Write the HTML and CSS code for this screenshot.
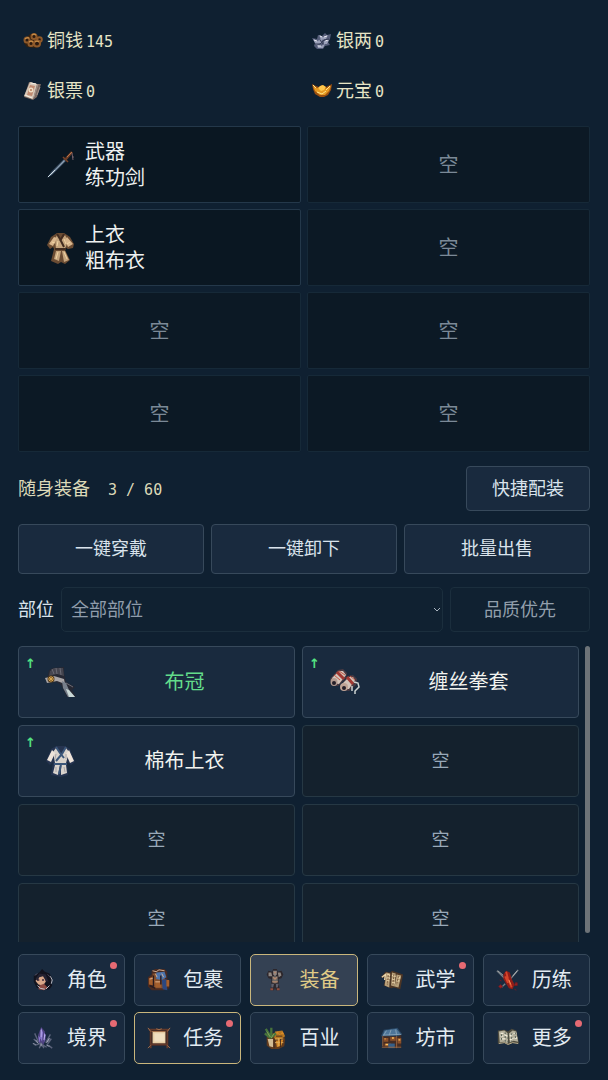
FILE: index.html
```
<!DOCTYPE html>
<html lang="zh-CN">
<head>
<meta charset="utf-8">
<meta name="viewport" content="width=device-width, initial-scale=1">
<title>装备</title>
<link rel="stylesheet" href="styles.css">
</head>
<body>
<main class="screen">
  <section class="wallet" aria-label="货币">
    <div class="coin">
      <svg class="icon-sm" viewBox="0 0 20 20" aria-hidden="true"><path d="M3 7l4-4h6l6 5-1 6-6 3-8-1-3-4z" fill="#33200f"/><g fill="#2b1a10" stroke="#8f5a2b" stroke-width="2"><circle cx="11" cy="5.500" r="2.500"/><circle cx="4" cy="9" r="2.500"/><circle cx="16.500" cy="8.500" r="2.300"/><circle cx="8" cy="12.500" r="2.500"/><circle cx="14" cy="12.500" r="3"/></g><g fill="none" stroke="#d39a50"><path d="M9 4q2-2 4 0M2 8q2-2 4-1M6 11q2-2 4 0M12 11q2-2 4 0"/></g></svg>
      <span>铜钱</span><span class="num">145</span>
    </div>
    <div class="coin">
      <svg class="icon-sm" viewBox="0 0 20 20" aria-hidden="true"><path d="M0 7l5 1 1-4 4 1 3-3 2 2 4-1-1 5-2 3 2 3-5 1-2 3H5l-3-3 1-3z" fill="#555d79"/><path d="M1 8l4 2 5-2-1 4-5 2zM7 4l4 2 5-2-2 4-5 1zM5 14l4 1 4-2-2 4H6zM12 10l5-1-2 4h-3z" fill="#9aa0b8"/><path d="M2 9l3 1M12 6l3-1M8 5l2 1M6 15h3M13 10l3-1" stroke="#e6e7ef"/><path d="M3 13l5 0 4-4 5-1M8 9l3 4" stroke="#353c55" fill="none"/></svg>
      <span>银两</span><span class="num">0</span>
    </div>
    <div class="coin">
      <svg class="icon-sm" viewBox="0 0 20 20" aria-hidden="true"><path d="M6 1l8 2 4 0-4 13-4 3-9-3z" fill="#7d6a62"/><path d="M7 1l7 2-4 15-9-3z" fill="#d6c7b8"/><path d="M7 4l5 1-3 10-5-1z" fill="#c08a70"/><circle cx="8" cy="9" r="2.500" fill="#f0dfc5"/><circle cx="8" cy="9" r="1" fill="#b87858"/><path d="M15 3l-4 13M17 6l-3 8" stroke="#a49389" fill="none"/><path d="M8 2l5 1M2 14l7 3" stroke="#f6eee0"/></svg>
      <span>银票</span><span class="num">0</span>
    </div>
    <div class="coin">
      <svg class="icon-sm" viewBox="0 0 20 20" aria-hidden="true"><path d="M0 3l4 2 3 1 3-2 4 2 6-3-1 6-3 5-4 2H8l-5-3-2-5z" fill="#9c5010"/><path d="M1 5l4 2 5 1 5-1 4-2-2 5-4 4H8l-5-4z" fill="#e79a22"/><path d="M6 7l2-2 3-1 3 2-2 3-3 1z" fill="#ffc84c"/><path d="M1 4l3 3M5 11l5 2 4-3M18 5l-4 4" stroke="#ffe58d" fill="none"/></svg>
      <span>元宝</span><span class="num">0</span>
    </div>
  </section>

  <section class="worn" aria-label="已穿戴">
    <button class="slot" type="button">
      <svg class="icon-md" viewBox="0 0 28 32" aria-hidden="true"><path d="M0 29l4-6L17 10l2 2L5 26z" fill="#3b4f64"/><path d="M1 28L17 11l1 1L5 25z" fill="#8fa2b4"/><path d="M1 28l7-7" stroke="#d4e0e6"/><path d="M16 8l5 5" stroke="#7c452a" stroke-width="1.500"/><path d="M18 11l7-8" stroke="#6e3d26" stroke-width="2.500"/><path d="M20 8l5-5" stroke="#b8754a"/><path d="M25 4l1 7M25 8h2" stroke="#74606a"/></svg>
      <span class="lines"><span>武器</span><span>练功剑</span></span>
    </button>
    <button class="slot slot-empty" type="button">空</button>
    <button class="slot" type="button">
      <svg class="icon-md" viewBox="0 0 28 32" aria-hidden="true"><path d="M10 1h7l6 4 4 7-1 4-5 1-3-2v3l5 10-5 4-4-2-3 2-7-3 3-12-1-2-3 2-3-4 4-8z" fill="#6b4c33"/><path d="M10 3l4 5 4-5 3 6-3 8H9L8 7zM9 19h5l-2 10-5-2zM15 19h3l4 9-5 2z" fill="#c5a57e"/><path d="M7 5l-5 7 4 2 4-8zM20 5l6 7-5 3-3-7z" fill="#d9b68d"/><path d="M10 2l3 5 4 8M17 2l-4 7M8 17h11" stroke="#422c20" stroke-width="2" fill="none"/><path d="M11 9l-1 5M17 7l2 5M11 20l-2 7M17 20l3 7M5 10l3 1M23 10l-3 2" stroke="#f0d3a4" fill="none"/></svg>
      <span class="lines"><span>上衣</span><span>粗布衣</span></span>
    </button>
    <button class="slot slot-empty" type="button">空</button>
    <button class="slot slot-empty" type="button">空</button>
    <button class="slot slot-empty" type="button">空</button>
    <button class="slot slot-empty" type="button">空</button>
    <button class="slot slot-empty" type="button">空</button>
  </section>

  <header class="bag-head">
    <h1 class="bag-title">随身装备</h1>
    <span class="num">3 / 60</span>
    <button class="btn btn-quick" type="button">快捷配装</button>
  </header>

  <div class="actions">
    <button class="btn" type="button">一键穿戴</button>
    <button class="btn" type="button">一键卸下</button>
    <button class="btn" type="button">批量出售</button>
  </div>

  <div class="filters">
    <label for="part">部位</label>
    <div class="select-wrap">
      <select id="part" class="select"><option>全部部位</option></select>
      <svg class="chevron" viewBox="0 0 6 4" aria-hidden="true"><path d="M0 0l3 3 3-3" fill="none" stroke="#a9b4bf"/></svg>
    </div>
    <button class="btn btn-dim" type="button">品质优先</button>
  </div>

  <section class="bag" aria-label="背包">
    <div class="bag-grid">
      <button class="item" type="button">
        <span class="better">↑</span>
        <svg class="icon-lg" viewBox="0 0 32 32" aria-hidden="true"><path d="M2 12L4 4l4-2 11-1 0 6 2 9 9 5-3 3 4 7-9 0-6-12-5-3-9 1z" fill="#262833"/><path d="M5 5l4-3 9 0 1 8-7-2-8 2z" fill="#45454f"/><path d="M7 3l2 5M11 2l1 6M15 2l1 7M21 17l7 4" stroke="#6a6a74"/><path d="M0 12l9-2 10 3 1 5-8-3-10 2z" fill="#a9a5a6"/><path d="M17 15l4 2 3 7 6 7h-7l-5-9z" fill="#777f8b"/><path d="M21 23l3 1 6 7h-6z" fill="#c9d8d6"/><circle cx="6" cy="13" r="3.500" fill="#59401e"/><path d="M6 10v6M3 13h6M4 11l4 4M8 11l-4 4" stroke="#d6a451"/></svg>
        <span class="item-name is-fine">布冠</span>
      </button>
      <button class="item" type="button">
        <span class="better">↑</span>
        <svg class="icon-lg" viewBox="0 0 32 32" aria-hidden="true"><path d="M1 13L9 4l5-1 4 4-1 5-8 8-6-1zM12 19l7-9 5-1 4 4-1 6-7 6-6-1z" fill="#4b3a42"/><path d="M3 12l7-7 4 0 3 4-7 9-6-1zM13 18l7-7 4 0 2 3-6 9-5 0z" fill="#d3c4ba"/><path d="M8 6l7 7M18 11l6 7" stroke="#a03832" stroke-width="3"/><path d="M10 5l6 4M5 9l6 5M21 10l5 4" stroke="#c45643"/><ellipse cx="5" cy="16" rx="3.500" ry="4" fill="#b39b90"/><ellipse cx="15" cy="21" rx="4" ry="4" fill="#c0a496"/><circle cx="5" cy="17" r="2" fill="#251f29"/><circle cx="15" cy="22" r="2" fill="#251f29"/><path d="M25 16l4 1 1 4-4 4 0 3M23 20v5" fill="none" stroke="#ccd2d1" stroke-width="1.500"/></svg>
        <span class="item-name">缠丝拳套</span>
      </button>
      <button class="item" type="button">
        <span class="better">↑</span>
        <svg class="icon-lg" viewBox="0 0 32 32" aria-hidden="true"><path d="M11 1h9l5 3 5 13-4 3-4-3 1 13-7 2-10-2 2-13-3 3-4-4L6 4z" fill="#263450"/><path d="M11 3l5 6 5-6 3 4-3 11H10L8 7zM10 20h5l-2 10-5-2zM16 20h5l1 8-6 2z" fill="#d9d3cc"/><path d="M7 5L2 15l4 2 4-9zM24 5l5 11-4 2-4-9z" fill="#eee4da"/><path d="M11 2l4 6 4 5M21 2l-4 7-6 7M9 19h13M16 20l-2 9" fill="none" stroke="#3b5679" stroke-width="2"/><path d="M11 9l-1 5M21 9v5M11 22v5M19 22l1 5" stroke="#aaa5a9"/></svg>
        <span class="item-name">棉布上衣</span>
      </button>
      <button class="item item-empty" type="button">空</button>
      <button class="item item-empty" type="button">空</button>
      <button class="item item-empty" type="button">空</button>
      <button class="item item-empty" type="button">空</button>
      <button class="item item-empty" type="button">空</button>
    </div>
    <div class="track" aria-hidden="true"><div class="thumb"></div></div>
  </section>

  <nav class="tabs" aria-label="主菜单">
    <button class="tab" type="button">
      <svg class="icon-tab" viewBox="-1 -1 26 26" aria-hidden="true"><path d="M8 4l3-4 3 3 5 2 3 5-1 5 1 3-3 4-7 1-7-3-3-6 0-7z" fill="#11131e"/><path d="M5 10l4-4 5 2 1 6-3 4-5-1-3-4z" fill="#d9a88a"/><path d="M4 11l4-6 7 1 3 8-3-1-3-5-4 1-2 4z" fill="#242232"/><path d="M6 12h2M11 12h2" stroke="#352033" stroke-width="1.500"/><path d="M8 18l5-2 4 4-4 3-6-1z" fill="#8d4c43"/><path d="M6 18l3 3 5 1M20 8l2 4-1 4M19 18l-4 4" stroke="#c5c7cf" fill="none"/><path d="M3 7l3-2M17 6l3 3" stroke="#575268"/></svg>
      <span>角色</span><i class="dot"></i>
    </button>
    <button class="tab" type="button">
      <svg class="icon-tab" viewBox="-1 -1 26 26" aria-hidden="true"><path d="M4 2l4-2h10l3 3v8l3 2-1 8-6 2H4l-4-4V9l4-3z" fill="#492a20"/><path d="M5 5h13l1 16H6z" fill="#83502e"/><path d="M9 4l9-1 2 6-5 3-6-1z" fill="#4b73ab"/><path d="M15 12l5-1 1 12-5-1z" fill="#2b4780"/><path d="M1 10l5-2 2 5-1 5-6-1zM8 13h6v7H8zM20 12h3v7h-3z" fill="#a55f2d"/><path d="M5 2l4 1 3-2 6 1M2 11l4-1M8 14h5M8 5l2 4M15 5l2 4" stroke="#d9b598" fill="none"/><path d="M6 7v12M14 7v10M2 18l6 3" stroke="#281b20" stroke-width="1.500"/></svg>
      <span>包裹</span>
    </button>
    <button class="tab is-active" type="button" aria-current="page">
      <svg class="icon-tab" viewBox="-1 -1 26 26" aria-hidden="true"><path d="M10 0h4l1 3 4-1 2 4-2 4-3 1 0 4 1 8h-4l-1-3-1 3H7l1-8 0-4-3-1-2-4 2-4 4 1z" fill="#2c262b"/><path d="M10 2h4v4l-2 2-2-2zM5 4l3 0 1 4H5zM15 4h3l1 3-3 2z" fill="#8d8580"/><path d="M9 8h6l0 6-3 2-3-2z" fill="#6d6864"/><path d="M10 9l2 2 2-2M9 14h6M11 4h2" fill="none" stroke="#b5886d" stroke-width="1.500"/><path d="M8 16l3 0-1 4H8zM13 16l3 0-1 4h-2z" fill="#5d5f6c"/><path d="M7 22h3M14 22h3" stroke="#8f4d3f" stroke-width="2"/></svg>
      <span>装备</span>
    </button>
    <button class="tab" type="button">
      <svg class="icon-tab" viewBox="-1 -1 26 26" aria-hidden="true"><path d="M0 9l5-6 5 1 2-2 12 4-3 16-7-2-3 1-8-3 2-8z" fill="#4c3525"/><path d="M6 4l4 1-1 15-5-2zM12 4l4 1-1 14-4-1zM17 6l5 1-3 13-4-1z" fill="#b7a07a"/><path d="M1 9l4-3-1 6M7 6l3 1M6 10h4M6 13h3M12 7l4 1M12 11h3M12 15h3M18 9l3 1M17 13h3" stroke="#ead5ab" stroke-width="1.500" fill="none"/><path d="M8 7l-1 10M14 6l-1 11M19 8l-2 9" stroke="#765237" stroke-dasharray="2 1"/></svg>
      <span>武学</span><i class="dot"></i>
    </button>
    <button class="tab" type="button">
      <svg class="icon-tab" viewBox="-1 -1 26 26" aria-hidden="true"><path d="M0 2l9 9M23 1L13 13M9 16l-4 4" stroke="#777f86" stroke-width="1.500"/><path d="M1 2l6 5M22 2l-5 6" stroke="#d2d4cf" stroke-width=".7"/><path d="M7 6l3-4 4 2 2 7 3 6-2 5-4-1-3-5-3-5z" fill="#8f1d18"/><path d="M10 3l2 8 4 9M9 8l3 7" stroke="#d5442a" stroke-width="2" fill="none"/><path d="M13 12l2 5" stroke="#f09457"/><path d="M4 17l2 2-2 2-2-2zM20 15h2v3h-3zM3 12l2 1M19 22l2 1" fill="#9b2222" stroke="#701a22"/></svg>
      <span>历练</span>
    </button>
    <button class="tab" type="button">
      <svg class="icon-tab" viewBox="-1 -1 26 26" aria-hidden="true"><path d="M7 8l3-8 4 5 1 9-3 6-6-4z" fill="#4d427f"/><path d="M10 1l2 5-1 10-2-4zM7 9l2 3-1 6zM13 6l2 3-2 8z" fill="#8a79cf"/><path d="M10 3v8M14 8l-1 6" stroke="#c0b3ee"/><path d="M2 13l4 4M3 7l4 9M20 8l-5 9 6-4-5 7M3 20l6-2 7 4M8 23l2-5 3 5M18 20l4 3" stroke="#5b637b" stroke-width="1.500" fill="none"/><path d="M4 14l3 4M19 12l-3 5M10 18v3M16 20l3 1M1 18l3 1" stroke="#a9acbf"/></svg>
      <span>境界</span><i class="dot"></i>
    </button>
    <button class="tab is-marked" type="button">
      <svg class="icon-tab" viewBox="-1 -1 26 26" aria-hidden="true"><path d="M2 3h20v17H2z" fill="#2d1c1a"/><path d="M5 5h14v13H5z" fill="#e9cfa6"/><path d="M7 7h11v9H7z" fill="#f0dfc0"/><path d="M1 3h22M3 19h18M3 2v21M21 2v21" stroke="#63392a" stroke-width="2"/><path d="M0 1l3 4M24 1l-3 4M4 5h15M3 20l-3 3M21 20l3 3M9 2l3 1 3-1" stroke="#a6714c" fill="none"/></svg>
      <span>任务</span><i class="dot"></i>
    </button>
    <button class="tab" type="button">
      <svg class="icon-tab" viewBox="-1 -1 26 26" aria-hidden="true"><path d="M3 11l5-4 5-1 8 0 2 8-1 7-6 3H8l-5-4z" fill="#613a1d"/><path d="M12 5l8-1 3 6-6 4-6-1z" fill="#b87822"/><path d="M12 7l3-2 2 4 3-4 2 3M13 15l8-1-2 6-5 2z" fill="#d78a28"/><path d="M2 2l5 8M8 1l0 10M13 7l-6 5M1 7l6 5" stroke="#47733c" stroke-width="2.500"/><path d="M3 5l4 6M11 7l-3 5" stroke="#86a457"/><path d="M4 13h6l0 9-4-1z" fill="#d3bc94"/><path d="M12 17h9M12 13h9M16 12v9" stroke="#e0ad58"/><path d="M18 13l0 9M13 10l7 0M11 12v11" stroke="#40291d"/></svg>
      <span>百业</span>
    </button>
    <button class="tab" type="button">
      <svg class="icon-tab" viewBox="-1 -1 26 26" aria-hidden="true"><path d="M2 9h20v13H2z" fill="#442c24"/><path d="M3 3l15-2 5 7-4 2H0z" fill="#294764"/><path d="M4 4l13-2 4 5-4 2H2z" fill="#4d7599"/><path d="M6 4L3 9M11 3L9 9M16 3l1 6M2 9l20-1" stroke="#86a3b8" fill="none"/><path d="M3 12h5v4H3zM10 11h6v4h-6zM18 12h4v6h-4zM4 18h7v3H4z" fill="#8b5029"/><path d="M12 12h2M4 13h1M19 14h2M5 19h3" stroke="#ffc45e" stroke-width="1.500"/><path d="M8 18h7v5H8z" fill="#345f8a"/><path d="M2 10v11M17 10v13M1 22h21" stroke="#9a6540"/></svg>
      <span>坊市</span>
    </button>
    <button class="tab" type="button">
      <svg class="icon-tab" viewBox="-1 -1 26 26" aria-hidden="true"><path d="M1 4l7-1 4 2 4-3 5 2 3 14-6-1-5 2-6-2-6 1z" fill="#4e4b3e"/><path d="M2 5l6-1 4 3v11l-5-2-4 1zM13 7l4-3 4 1 2 11-5-1-4 2z" fill="#b3af9b"/><path d="M4 7l3 0M8 8l3 2M4 10h3M4 13h5M14 10l3-2M18 7h3M14 14l4-2M19 12h3" stroke="#efebda" stroke-width="1.500"/><path d="M5 8v7M9 6v10M12 7v12M16 7v9M20 6v8" stroke="#4b574f" stroke-dasharray="2 2"/><path d="M2 18l6-1 4 2 5-2 6 1" stroke="#c4b58f" fill="none"/></svg>
      <span>更多</span><i class="dot"></i>
    </button>
  </nav>
</main>
</body>
</html>
```
FILE: styles.css
```
:root {
  --ink: #d9e3ec;
  --cream: #e6e4c6;
  --gold: #e0cb86;
  --panel: #192a3e;
  --line: #37495b;
}

* { box-sizing: border-box; }

body {
  margin: 0;
  background: #0f2031;
  color: var(--ink);
  font: 18px/24px "Liberation Sans", "Noto Sans CJK SC", sans-serif;
}

button, select {
  margin: 0;
  padding: 0;
  font: inherit;
  color: inherit;
}

.screen {
  display: flex;
  flex-direction: column;
  height: 100vh;
  min-height: 900px;
  padding: 19px 18px 16px;
}

.wallet {
  display: grid;
  grid-template-columns: 1fr 1fr;
  gap: 6px;
  margin-bottom: 13px;
}

.coin {
  display: flex;
  align-items: center;
  height: 44px;
  padding-left: 5px;
  color: var(--cream);
}

.icon-sm {
  width: 20px;
  height: 20px;
  margin-right: 4px;
}

.num {
  padding-top: 2px;
  font: 15px/24px "DejaVu Sans Mono", monospace;
  white-space: pre;
}

.coin .num { margin-left: 3px; }

.worn {
  display: grid;
  grid-template-columns: 1fr 1fr;
  gap: 6px;
  margin-bottom: 14px;
}

.slot {
  display: flex;
  align-items: center;
  gap: 10px;
  height: 77px;
  padding-left: 28px;
  border: 1px solid #24384a;
  border-radius: 2px;
  background: #0a1722;
  color: #eef1f0;
  font-size: 20px;
  line-height: 26px;
  text-align: left;
}

.lines {
  display: flex;
  flex-direction: column;
}

.icon-md {
  width: 28px;
  height: 32px;
}

.slot-empty {
  justify-content: center;
  padding: 0;
  border-color: #162938;
  background: #0c1925;
  color: #7b8997;
}

.bag-head {
  display: flex;
  align-items: center;
  gap: 18px;
  margin-bottom: 13px;
  color: #dcd9b8;
}

.bag-title {
  margin: 0;
  font-size: 18px;
  font-weight: 400;
}

.btn {
  height: 50px;
  border: 1px solid var(--line);
  border-radius: 4px;
  background: var(--panel);
  color: var(--ink);
}

.btn-quick {
  height: 45px;
  margin-left: auto;
  padding: 0 25px;
}

.actions {
  display: grid;
  grid-template-columns: repeat(3, 1fr);
  gap: 7px;
  margin-bottom: 13px;
}

.filters {
  display: flex;
  align-items: center;
  gap: 7px;
  margin-bottom: 14px;
}

.select-wrap {
  position: relative;
  flex: 1;
}

.select {
  display: block;
  width: 100%;
  height: 45px;
  padding: 0 9px;
  border: 1px solid #1b2e3d;
  border-radius: 5px;
  background: #102131;
  color: #8f9cab;
  appearance: none;
}

.chevron {
  position: absolute;
  top: 21px;
  right: 3px;
  width: 6px;
  height: 4px;
}

.btn-dim {
  height: 45px;
  padding: 0 33px;
  border-color: #1b2e3d;
  background: #102131;
  color: #929fac;
}

.bag {
  display: flex;
  gap: 6px;
  flex: 1;
  min-height: 0;
  margin-bottom: 12px;
}

.bag-grid {
  display: grid;
  grid-template-columns: 1fr 1fr;
  align-content: start;
  gap: 7px;
  flex: 1;
  overflow-y: auto;
  scrollbar-width: none;
}

.item {
  position: relative;
  display: flex;
  align-items: center;
  gap: 8px;
  height: 72px;
  padding: 0 10px 0 26px;
  border: 1px solid var(--line);
  border-radius: 4px;
  background: var(--panel);
  color: #f2f3ee;
  font-size: 20px;
}

.item-name {
  flex: 1;
  text-align: center;
}

.is-fine { color: #63dc8b; }

.icon-lg {
  width: 32px;
  height: 32px;
}

.better {
  position: absolute;
  top: 9px;
  left: 6px;
  color: #55e283;
  font: bold 13px/16px "DejaVu Sans", sans-serif;
}

.item-empty {
  justify-content: center;
  padding: 0;
  border-color: #263844;
  background: #14212d;
  color: #99a9b8;
  font-size: 18px;
}

.track { width: 5px; }

.thumb {
  height: 97%;
  border-radius: 3px;
  background: #6d7378;
}

.tabs {
  display: grid;
  grid-template-columns: repeat(5, 1fr);
  gap: 6px 9px;
}

.tab {
  position: relative;
  display: flex;
  align-items: center;
  gap: 12px;
  height: 52px;
  padding-left: 12px;
  border: 1px solid var(--line);
  border-radius: 5px;
  background: var(--panel);
  color: #e2ebf2;
  font-size: 20px;
  white-space: nowrap;
}

.tab.is-active {
  border-color: #c9b67c;
  background: #344153;
  color: var(--gold);
}

.tab.is-marked { border-color: #c9b67c; }

.icon-tab {
  width: 24px;
  height: 24px;
}

.dot {
  position: absolute;
  top: 7px;
  right: 7px;
  width: 7px;
  height: 7px;
  border-radius: 50%;
  background: #e66a73;
}
```
